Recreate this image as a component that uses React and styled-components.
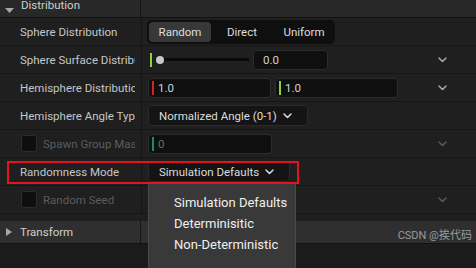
import React from 'react'
import styled, { createGlobalStyle } from 'styled-components'

const GlobalStyle = createGlobalStyle`
  body {
    margin:0;
    background:#1b1b1b;
    font-family:Roboto, "Noto Sans", sans-serif;
  }
`;

const Panel = styled.div`
    position:relative;
    width:476px;
    height:268px;
    overflow:hidden;
    background:#1b1b1b;
    font-size:11.5px;
    color:#c4c4c4;
`;

const CategoryHeader = styled.div`
    display:grid;
    grid-template-columns:141px 1fr;
    height:${p => p.$h}px;
    background:${p => p.$bg};
    border-bottom:1px solid #121212;
`;

const CategoryName = styled.div`
    display:flex;
    align-items:${p => p.$align};
    gap:${p => p.$gap}px;
    padding-left:${p => p.$pad}px;
    border-right:1px solid #161616;
    color:#cfcfcf;
    line-height:11px;
    white-space:nowrap;
`;

const Row = styled.div`
    position:relative;
    display:grid;
    grid-template-columns:141px 1fr 20px;
    padding-right:24px;
    height:27px;
    border-bottom:1px solid #151515;
    background:#1f1f1f;
`;

const LabelCell = styled.div`
    display:flex;
    align-items:center;
    gap:6px;
    padding-left:${p => p.$pad}px;
    padding-right:6px;
    min-width:0;
`;

const LabelText = styled.span`
    flex:1;
    min-width:0;
    overflow:hidden;
    white-space:nowrap;
    color:${p => p.$dim ? '#5c5c5c' : '#c6c6c6'};
`;

const CheckBox = styled.div`
    flex:none;
    width:16px;
    height:17px;
    box-sizing:border-box;
    border:1px solid #2c2c2c;
    border-radius:3px;
    background:#0e0e0e;
`;

const ValueCell = styled.div`
    display:flex;
    align-items:center;
    gap:4px;
    padding-left:6px;
    border-left:1px solid #161616;
`;

const ExtCell = styled.div`
    display:flex;
    align-items:center;
    justify-content:center;
`;

const Segmented = styled.div`
    display:flex;
    height:24px;
    box-sizing:border-box;
    padding:2px 0 2px 2px;
    margin-left:-1px;
    border-radius:5px;
    background:#0f0f0f;
`;

const Segment = styled.div`
    display:flex;
    align-items:center;
    justify-content:center;
    width:62px;
    border-radius:4px;
    background:${p => p.$active ? '#383838' : 'transparent'};
    color:#dedede;
`;

const Tick = styled.div`
    flex:none;
    width:2px;
    height:14px;
    background:${p => p.$color};
`;

const Knob = styled.div`
    flex:none;
    width:8px;
    height:8px;
    margin-left:4px;
    border-radius:50%;
    background:#c8c8c8;
`;

const Track = styled.div`
    width:85px;
    height:3px;
    background:#0a0a0a;
`;

const InputBox = styled.div`
    display:flex;
    align-items:center;
    gap:4px;
    width:${p => p.$w}px;
    height:20px;
    box-sizing:border-box;
    padding-left:${p => p.$tick ? 3 : 9}px;
    border:1px solid #2c2c2c;
    border-radius:4px;
    background:#0f0f0f;
    color:${p => p.$dim ? '#6a6a6a' : '#d2d2d2'};
`;

const Dropdown = styled.div`
    display:flex;
    align-items:center;
    gap:6px;
    height:21px;
    box-sizing:border-box;
    padding:0 15px 0 10px;
    border:1px solid #2a2a2a;
    border-radius:4px;
    background:#141414;
    color:#dcdcdc;
    white-space:nowrap;
`;

const Highlight = styled.div`
    position:absolute;
    left:7px;
    top:3px;
    width:292px;
    height:23px;
    box-sizing:border-box;
    border:2px solid #e3141d;
    z-index:3;
    pointer-events:none;
`;

const Menu = styled.div`
    position:absolute;
    left:148px;
    top:25px;
    width:148px;
    height:110px;
    box-sizing:border-box;
    padding-top:8px;
    border:1px solid #4a4a4a;
    background:#393939;
    z-index:2;
`;

const MenuItem = styled.div`
    height:21px;
    line-height:21px;
    padding-left:25px;
    font-size:13px;
    color:#f0f0f0;
`;

const Spacer = styled.div`
    height:7px;
    background:#1f1f1f;
`;

const Watermark = styled.div`
    position:absolute;
    right:4px;
    top:226px;
    font-family:Roboto, "Noto Sans CJK SC", sans-serif;
    font-size:11px;
    color:#9a9a9a;
`;

function Chevron({ color = '#dcdcdc', w = 9 }) {
  return (
    <svg width={w} height="6" viewBox="0 0 9 6" style={{ flex: 'none' }}>
      <path d="M1 1 L4.5 4.5 L8 1" fill="none" stroke={color} strokeWidth="1.5" strokeLinecap="round" strokeLinejoin="round" />
    </svg>
  )
}

function Caret({ open }) {
  return open ? (
    <svg width="9" height="5" viewBox="0 0 9 5"><path d="M0 0 H9 L4.5 5 Z" fill="#a8a8a8" /></svg>
  ) : (
    <svg width="6" height="8" viewBox="0 0 6 8"><path d="M0 0 L6 4 L0 8 Z" fill="#a8a8a8" /></svg>
  )
}

const menuItems = ['Simulation Defaults', 'Determinisitic', 'Non-Deterministic'];

export default function App() {
  return (
    <Panel>
      <GlobalStyle />
      <CategoryHeader $h={17} $bg="#282828">
        <CategoryName $align="flex-start" $gap={7} $pad={5}>
          <span style={{ paddingTop: 4 }}><Caret open /></span>
          <span>Distribution</span>
        </CategoryName>
        <div />
      </CategoryHeader>

      <Row>
        <LabelCell $pad={20}><LabelText>Sphere Distribution</LabelText></LabelCell>
        <ValueCell>
          <Segmented>
            <Segment $active>Random</Segment>
            <Segment>Direct</Segment>
            <Segment>Uniform</Segment>
          </Segmented>
        </ValueCell>
        <ExtCell />
      </Row>

      <Row>
        <LabelCell $pad={20}><LabelText>Sphere Surface Distribution</LabelText></LabelCell>
        <ValueCell style={{ gap: 0 }}>
          <Tick $color="#8ed33b" style={{ marginLeft: 2 }} />
          <Knob />
          <Track />
          <InputBox $w={75} style={{ marginLeft: 4 }}>0.0</InputBox>
        </ValueCell>
        <ExtCell><Chevron color="#a8a8a8" /></ExtCell>
      </Row>

      <Row>
        <LabelCell $pad={20}><LabelText>Hemisphere Distribution</LabelText></LabelCell>
        <ValueCell>
          <InputBox $w={123} $tick><Tick $color="#d4231c" />1.0</InputBox>
          <InputBox $w={123} $tick><Tick $color="#8ed33b" />1.0</InputBox>
        </ValueCell>
        <ExtCell><Chevron color="#a8a8a8" /></ExtCell>
      </Row>

      <Row>
        <LabelCell $pad={20}><LabelText>Hemisphere Angle Type</LabelText></LabelCell>
        <ValueCell>
          <Dropdown>Normalized Angle (0-1)<Chevron /></Dropdown>
        </ValueCell>
        <ExtCell />
      </Row>

      <Row>
        <LabelCell $pad={21}><CheckBox /><LabelText $dim>Spawn Group Mask</LabelText></LabelCell>
        <ValueCell>
          <InputBox $w={124} $tick $dim><Tick $color="#1d8a66" />0</InputBox>
        </ValueCell>
        <ExtCell><Chevron color="#585858" /></ExtCell>
      </Row>

      <Row>
        <LabelCell $pad={20}><LabelText>Randomness Mode</LabelText></LabelCell>
        <ValueCell>
          <Dropdown>Simulation Defaults<Chevron /></Dropdown>
        </ValueCell>
        <ExtCell />
        <Highlight />
        <Menu>
          {menuItems.map(item => <MenuItem key={item}>{item}</MenuItem>)}
        </Menu>
      </Row>

      <Row>
        <LabelCell $pad={21}><CheckBox /><LabelText $dim>Random Seed</LabelText></LabelCell>
        <ValueCell />
        <ExtCell><Chevron color="#585858" /></ExtCell>
      </Row>

      <Spacer />

      <CategoryHeader $h={22} $bg="#2f2f2f">
        <CategoryName $align="center" $gap={8} $pad={6}>
          <Caret />
          <span>Transform</span>
        </CategoryName>
        <div />
      </CategoryHeader>

      <Watermark>CSDN @挨代码</Watermark>
    </Panel>
  )
}
